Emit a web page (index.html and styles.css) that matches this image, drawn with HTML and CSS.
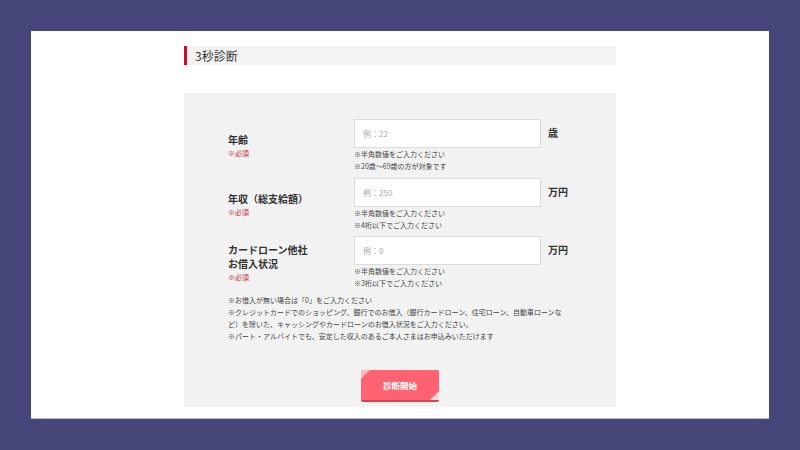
FILE: index.html
```html
<!DOCTYPE html>
<html lang="ja">
<head>
<meta charset="utf-8">
<link rel="stylesheet" href="styles.css">
</head>
<body>
<div class="page">
  <div class="col">
    <h2 class="heading">3秒診断</h2>
    <div class="panel">
      <div class="row">
        <div class="label">
          <div class="label-text">年齢</div>
          <div class="req">※必須</div>
        </div>
        <div class="field">
          <div class="input"><span class="ph">例：22</span></div>
          <div class="hint">※半角数値をご入力ください</div>
          <div class="hint">※20歳～69歳の方が対象です</div>
        </div>
        <div class="unit">歳</div>
      </div>
      <div class="row">
        <div class="label">
          <div class="label-text">年収（総支給額）</div>
          <div class="req">※必須</div>
        </div>
        <div class="field">
          <div class="input"><span class="ph">例：250</span></div>
          <div class="hint">※半角数値をご入力ください</div>
          <div class="hint">※4桁以下でご入力ください</div>
        </div>
        <div class="unit">万円</div>
      </div>
      <div class="row">
        <div class="label">
          <div class="label-text">カードローン他社<br>お借入状況</div>
          <div class="req">※必須</div>
        </div>
        <div class="field">
          <div class="input"><span class="ph">例：0</span></div>
          <div class="hint">※半角数値をご入力ください</div>
          <div class="hint">※3桁以下でご入力ください</div>
        </div>
        <div class="unit">万円</div>
      </div>
      <div class="notes">
        <p>※お借入が無い場合は「0」をご入力ください</p>
        <p>※クレジットカードでのショッピング、銀行でのお借入（銀行カードローン、住宅ローン、自動車ローンなど）を除いた、キャッシングやカードローンのお借入状況をご入力ください。</p>
        <p>※パート・アルバイトでも、安定した収入のあるご本人さまはお申込みいただけます</p>
      </div>
      <div class="actions">
        <button class="btn" type="button">診断開始</button>
      </div>
    </div>
  </div>
</div>
</body>
</html>
```
FILE: styles.css
```css
html, body {
  margin: 0;
  padding: 0;
}
body {
  background: #46467a;
  font-family: "Noto Sans CJK JP", "Noto Sans", sans-serif;
  color: #333;
  padding: 31px 31px 0 31px;
  height: 450px;
  box-sizing: border-box;
}
.page {
  background: #fff;
  height: 387px;
  display: flex;
  justify-content: center;
  box-shadow: 0 1px 0 #b9b9d6;
}
.col {
  width: 432px;
  padding-top: 15px;
}
.heading {
  margin: 0;
  height: 19px;
  background: #f3f3f3;
  border-left: 3px solid #c8102e;
  font-size: 12px;
  font-weight: normal;
  line-height: 19px;
  padding-left: 8px;
  color: #333;
}
.panel {
  margin-top: 28px;
  background: #f2f2f2;
  height: 314px;
  box-sizing: border-box;
  padding: 26px 0 0 44px;
}
.row {
  display: flex;
  align-items: flex-start;
  margin-bottom: 5px;
  height: 53.5px;
}
.label {
  width: 126px;
  align-self: center;
  padding-top: 1px;
}
.label-text {
  font-size: 10px;
  font-weight: bold;
  line-height: 14px;
  color: #333;
}
.req {
  font-size: 7px;
  line-height: 11px;
  margin-top: 1px;
  color: #d0263c;
}
.field {
  width: 187px;
}
.input {
  height: 29px;
  box-sizing: border-box;
  background: #fff;
  border: 1px solid #dcdcdc;
  padding-left: 8px;
  display: flex;
  align-items: center;
}
.ph {
  font-size: 8px;
  color: #aaa;
}
.hint {
  font-size: 7px;
  line-height: 12px;
  color: #444;
}
.hint:first-of-type {
  margin-top: 1px;
}
.unit {
  margin-left: 7px;
  margin-top: 8px;
  font-size: 10px;
  font-weight: bold;
  line-height: 12px;
  color: #333;
}
.notes {
  margin-top: -1px;
  width: 340px;
}
.notes p {
  margin: 0;
  font-size: 7px;
  line-height: 12px;
  color: #444;
}
.actions {
  display: flex;
  justify-content: center;
  margin-top: 28px;
  margin-left: -44px;
}
.btn {
  position: relative;
  width: 78px;
  height: 32px;
  background: #ff6371;
  border: none;
  border-bottom: 2px solid #d64556;
  border-radius: 2px;
  color: #fff;
  font-family: "Noto Sans CJK JP", sans-serif;
  font-size: 8.5px;
  font-weight: bold;
  padding: 0;
  overflow: hidden;
}
.btn::before,
.btn::after {
  content: "";
  position: absolute;
  width: 0;
  height: 0;
}
.btn::before {
  top: 0;
  left: 0;
  border-top: 9px solid rgba(255,255,255,0.55);
  border-right: 9px solid transparent;
}
.btn::after {
  bottom: 0;
  right: 0;
  border-bottom: 9px solid rgba(255,255,255,0.75);
  border-left: 9px solid transparent;
}
```
